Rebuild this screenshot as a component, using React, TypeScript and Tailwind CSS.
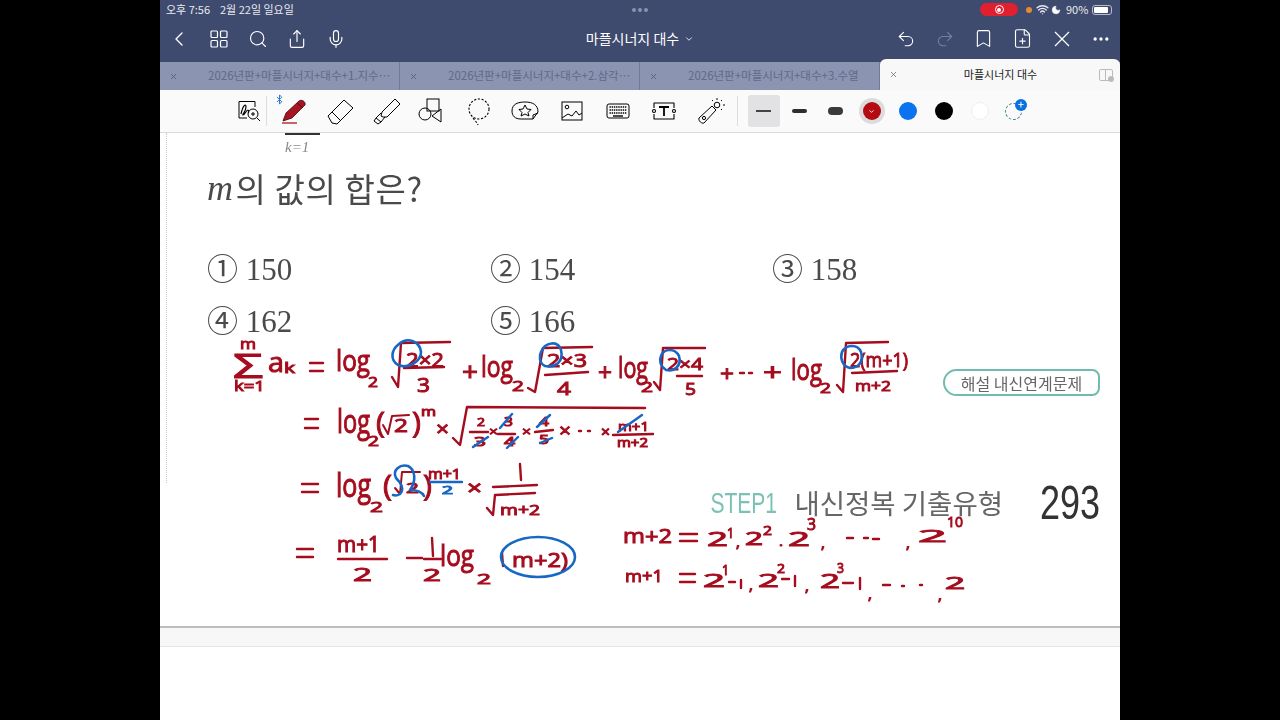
import { ChevronLeft, ChevronDown, Search, Share, Mic, Undo2, Redo2, Bookmark, FilePlus, MoreHorizontal, X, Wifi, Moon, Bluetooth } from "lucide-react";
import type { ReactNode } from "react";

const RED = "#a50d1e";
const BLUE = "#1668c4";

function T({ x, y, s, w, c, children }: { x: number; y: number; s: number; w?: number; c?: string; children: ReactNode }) {
  const col = c ?? RED;
  return (
    <text x={x} y={y} fontSize={s} fill={col} stroke={col} strokeWidth={1} textLength={w} lengthAdjust={w ? "spacingAndGlyphs" : undefined}>
      {children}
    </text>
  );
}

function P({ d, c, sw }: { d: string; c?: string; sw?: number }) {
  return <path d={d} fill="none" stroke={c ?? RED} strokeWidth={sw ?? 2.4} strokeLinecap="round" strokeLinejoin="round" />;
}

function Ink() {
  return (
    <svg viewBox="160 133 960 495" className="absolute inset-0 w-[960px] h-[495px] font-['Open_Sans',sans-serif] font-normal pointer-events-none blur-[0.3px]">
      {/* row 1 */}
      <T x={240} y={349} s={14} w={16}>m</T>
      <T x={233} y={378} s={32} w={30}>Σ</T>
      <T x={234} y={391} s={15} w={31}>k=1</T>
      <T x={268} y={372} s={27} w={16}>a</T>
      <T x={284} y={373} s={14} w={11}>k</T>
      <P d="M310 363 H323 M310 371 H323" />
      <T x={336} y={371} s={30} w={34}>log</T>
      <T x={368} y={387} s={15} w={10}>2</T>
      <P d="M392 377 L398 387 L401 343 L450 342" />
      <T x={406} y={367} s={20} w={38}>2×2</T>
      <P d="M404 368 L444 367" />
      <T x={417} y={392} s={20} w={13}>3</T>
      <T x={462} y={381} s={26} w={16}>+</T>
      <T x={481} y={377} s={30} w={32}>log</T>
      <T x={512} y={391} s={15} w={12}>2</T>
      <P d="M528 388 L535 392 L543 348 L592 347" />
      <T x={547} y={367} s={18} w={40}>2×3</T>
      <P d="M545 375 L588 372" />
      <T x={557} y={395} s={19} w={14}>4</T>
      <T x={598} y={381} s={24} w={14}>+</T>
      <T x={618} y={378} s={30} w={30}>log</T>
      <T x={641} y={392} s={14} w={12}>2</T>
      <P d="M654 382 L660 390 L663 348 L705 348" />
      <T x={667} y={370} s={17} w={36}>2×4</T>
      <P d="M677 376 L702 376" />
      <T x={685} y={395} s={17} w={11}>5</T>
      <T x={720} y={381} s={22} w={14}>+</T>
      <P d="M740 373 H744 M749 373 H752" />
      <T x={763} y={381} s={24} w={19}>+</T>
      <T x={791} y={380} s={30} w={31}>log</T>
      <T x={820} y={393} s={14} w={11}>2</T>
      <P d="M837 385 L843 392 L846 343 L888 342" />
      <T x={850} y={367} s={20} w={58}>2(m+1)</T>
      <P d="M852 373 L897 371" />
      <T x={855} y={391} s={15} w={36}>m+2</T>
      {/* row 2 */}
      <P d="M305 419 H318 M305 428 H318" />
      <T x={337} y={433} s={32} w={33}>log</T>
      <T x={368} y={446} s={14} w={11}>2</T>
      <T x={376} y={433} s={30} w={9}>(</T>
      <P d="M383 425 L388 434 L392 416 L409 415" sw={2} />
      <T x={394} y={432} s={19} w={14}>2</T>
      <T x={412} y={433} s={30} w={9}>)</T>
      <T x={421} y={416} s={12} w={15}>m</T>
      <T x={436} y={436} s={20} w={13}>×</T>
      <P d="M453 438 L460 445 L467 407 L645 408" />
      <T x={477} y={426} s={11} w={8}>2</T>
      <P d="M470 432 H488" />
      <T x={474} y={446} s={12} w={12}>3</T>
      <T x={489} y={436} s={13} w={9}>×</T>
      <T x={504} y={426} s={13} w={9}>3</T>
      <P d="M498 434 H515" />
      <T x={504} y={446} s={12} w={11}>4</T>
      <T x={522} y={436} s={13} w={9}>×</T>
      <T x={539} y={426} s={13} w={10}>4</T>
      <P d="M535 432 L553 430" />
      <T x={539} y={444} s={12} w={10}>5</T>
      <T x={559} y={437} s={19} w={12}>×</T>
      <P d="M579 431 H581 M588 431 H590" />
      <T x={601} y={437} s={14} w={9}>×</T>
      <T x={618} y={431} s={13} w={31}>m+1</T>
      <P d="M613 435 L653 434" />
      <T x={617} y={447} s={12} w={31}>m+2</T>
      {/* row 3 */}
      <P d="M302 484 H318 M302 492 H318" />
      <T x={336} y={497} s={32} w={35}>log</T>
      <T x={370} y={512} s={15} w={13}>2</T>
      <T x={383} y={496} s={30} w={9}>(</T>
      <P d="M395 488 L400 494 L402 472 L420 472" sw={2} />
      <T x={406} y={493} s={15} w={13}>2</T>
      <T x={423} y={496} s={30} w={9}>)</T>
      <T x={428} y={479} s={14} w={33}>m+1</T>
      <T x={467} y={495} s={20} w={15}>×</T>
      <P d="M520 464 L521 480" />
      <P d="M493 487 L537 485" />
      <P d="M487 508 L493 515 L495 495 L535 493" />
      <T x={500} y={515} s={15} w={40}>m+2</T>
      {/* row 4 */}
      <P d="M297 549 H313 M297 557 H313" />
      <T x={337} y={552} s={21} w={43}>m+1</T>
      <P d="M338 559 H387" />
      <T x={353} y={581} s={19} w={19}>2</T>
      <P d="M407 558 H422" />
      <P d="M432 538 L433 556" />
      <P d="M424 559 H441" />
      <T x={423} y={581} s={17} w={18}>2</T>
      <T x={440} y={566} s={30} w={34}>log</T>
      <T x={477} y={584} s={14} w={14}>2</T>
      <P d="M502 553 L503 566" />
      <T x={512} y={567} s={20} w={56}>m+2)</T>
      {/* right block */}
      <T x={623} y={543} s={20} w={49}>m+2</T>
      <P d="M680 534 H697 M680 541 H697" />
      <T x={707} y={546} s={20} w={21}>2</T>
      <T x={727} y={538} s={15} w={7}>1</T>
      <T x={736} y={547} s={14} w={4}>,</T>
      <T x={745} y={545} s={18} w={18}>2</T>
      <T x={763} y={535} s={13} w={9}>2</T>
      <T x={779} y={546} s={12} w={4}>.</T>
      <T x={788} y={546} s={20} w={22}>2</T>
      <T x={807} y={530} s={16} w={9}>3</T>
      <T x={821} y={548} s={14} w={4}>,</T>
      <P d="M847 538 H853 M864 538 H868 M873 539 H879" />
      <T x={906} y={548} s={14} w={4}>,</T>
      <T x={918} y={542} s={17} w={29}>2</T>
      <T x={947} y={527} s={15} w={16}>10</T>
      <T x={625} y={582} s={17} w={38}>m+1</T>
      <P d="M680 574 H695 M680 582 H695" />
      <T x={703} y={587} s={19} w={22}>2</T>
      <T x={722} y={575} s={14} w={7}>1</T>
      <P d="M729 582 H735 M741 580 V588" />
      <T x={749} y={590} s={14} w={4}>,</T>
      <T x={758} y={587} s={19} w={21}>2</T>
      <T x={777} y={573} s={13} w={8}>2</T>
      <P d="M782 579 H789 M795 576 V586" />
      <T x={805} y={591} s={14} w={4}>,</T>
      <T x={820} y={588} s={20} w={20}>2</T>
      <T x={837} y={573} s={15} w={7}>3</T>
      <P d="M843 583 H853 M860 578 V589" />
      <T x={868} y={599} s={14} w={4}>,</T>
      <P d="M883 585 H890 M902 586 H904 M920 585 H922" />
      <T x={938} y={600} s={14} w={4}>,</T>
      <T x={945} y={589} s={16} w={20}>2</T>
      {/* blue */}
      <P c={BLUE} sw={2.6} d="M399 344 C408 336 420 342 421 352 C421 362 408 369 398 365 C390 360 391 350 399 344" />
      <P c={BLUE} sw={2.6} d="M541 352 C545 342 558 340 561 350 C564 362 555 368 545 366 C539 363 539 356 541 352" />
      <P c={BLUE} sw={2.6} d="M661 356 C664 348 675 348 679 356 C682 366 674 372 666 370 C660 366 659 360 661 356" />
      <P c={BLUE} sw={2.6} d="M842 352 C846 344 858 344 861 352 C864 362 858 368 850 368 C842 366 840 358 842 352" />
      <P c={BLUE} d="M473 447 L488 437 M500 428 L512 414 M507 448 L518 437 M537 427 L550 415 M540 443 L552 438 M618 432 L642 415" />
      <P c={BLUE} sw={2.6} d="M393 495 C400 497 408 490 396 478 C392 470 400 464 408 466 C416 470 416 482 410 490 C418 490 422 492 424 496" />
      <P c={BLUE} d="M430 482 H462" />
      <T x={442} y={494} s={10} w={11} c={BLUE}>2</T>
      <ellipse cx={538} cy={557} rx={37} ry={20} fill="none" stroke={BLUE} strokeWidth={2.6} />
    </svg>
  );
}

function Pen() {
  return (
    <svg width="30" height="30" viewBox="0 0 30 30">
      <path d="M5 25 L8 17 L21 5 C24 3 28 6 27 9 L14 22 Z" fill="#a81420" stroke="#3a0a0e" strokeWidth="0.8" />
      <path d="M19 7 L25 12" stroke="#5a0a10" strokeWidth="1" />
      <path d="M4 27 H19" stroke="#a81420" strokeWidth="1.3" />
    </svg>
  );
}
const icn = "fill-none stroke-black";
function Eraser() {
  return (
    <svg width="30" height="30" viewBox="0 0 30 30" className={icn} strokeWidth="1">
      <path d="M3 20 L19 4 L28 12 L12 28 L7 27 Z" />
      <path d="M7 16 L16 25" />
    </svg>
  );
}
function Highlighter() {
  return (
    <svg width="30" height="30" viewBox="0 0 30 30" className={icn} strokeWidth="1">
      <path d="M11 16 L24 3 L29 8 L16 21 L12 21 L10 20 Z" />
      <path d="M10 17 L5 22 L10 26 L14 21 M5 22 L3 25 L7 28 L10 26" />
    </svg>
  );
}
function Shapes() {
  return (
    <svg width="30" height="30" viewBox="0 0 30 30" className={icn} strokeWidth="1">
      <rect x="10" y="3" width="12" height="12" />
      <circle cx="8" cy="18" r="6" />
      <path d="M24 13 L15 20 L24 26 Z" />
    </svg>
  );
}
function Lasso() {
  return (
    <svg width="30" height="30" viewBox="0 0 30 30" className={icn} strokeWidth="1.1" strokeDasharray="2.2 1.6">
      <ellipse cx="15" cy="13" rx="10" ry="10" />
      <path d="M9 22 C11 25 13 26 14 29" />
    </svg>
  );
}
function Sticker() {
  return (
    <svg width="30" height="30" viewBox="0 0 30 30" className={icn} strokeWidth="1">
      <path d="M2 15 C2 8 8 6 15 6 C23 6 28 9 28 16 L23 23 L11 23 C5 23 2 20 2 15 Z" />
      <path d="M15 9 L17 13 L21 13.5 L18 16.5 L19 20 L15 18 L11 20 L12 16.5 L9 13.5 L13 13 Z" />
      <path d="M23 23 L23 19 L28 17" />
    </svg>
  );
}
function Picture() {
  return (
    <svg width="30" height="30" viewBox="0 0 30 30" className={icn} strokeWidth="1">
      <rect x="5" y="6" width="20" height="18" />
      <circle cx="10" cy="11" r="1.8" />
      <path d="M5 22 L11 18 L15 20 L19 15 L22 19 L25 17" />
    </svg>
  );
}
function Keys() {
  return (
    <svg width="30" height="30" viewBox="0 0 30 30" className={icn} strokeWidth="1">
      <rect x="4" y="8" width="22" height="14" rx="2" />
      <path d="M6.5 11 H24 M6.5 14 H24 M6.5 17 H24" strokeDasharray="1.4 0.8" strokeWidth="1.6" />
      <path d="M10 20 H20" strokeWidth="1.4" />
    </svg>
  );
}
function TextBox() {
  return (
    <svg width="30" height="30" viewBox="0 0 30 30" className={icn} strokeWidth="1.1">
      <path d="M5 12 V7 H25 V12 M5 18 V23 H25 V18" strokeLinejoin="round" />
      <circle cx="5" cy="15" r="1.5" />
      <circle cx="25" cy="15" r="1.5" />
      <path d="M10 11 H20 M15 11 V20" strokeWidth="1.8" />
    </svg>
  );
}
function Laser() {
  return (
    <svg width="30" height="30" viewBox="0 0 30 30" className={icn} strokeWidth="1">
      <path d="M3 22 L16 10 L20 14 L8 27 C6 28 2 25 3 22 Z" />
      <circle cx="8" cy="22" r="1.6" />
      <circle cx="21" cy="9" r="2.8" />
      <path d="M21 2 V4 M27 9 H29 M26 4 L25 5 M16 4 L17 5 M26 14 L25 13" />
    </svg>
  );
}
function SearchNote() {
  return (
    <svg width="24" height="24" viewBox="0 0 24 24" className={icn} strokeWidth="1">
      <path d="M18 8 V2.5 H2 V19 H10" />
      <path d="M4 15 C6 6 9 4 9 8 C9 12 5 16 6 16 C8 16 9 11 11 11 C12 11 11 14 12 14" strokeWidth="1.2" />
      <circle cx="16" cy="15" r="5" />
      <path d="M14 15 H18 M16 13 V17 M20 19 L23 22" />
    </svg>
  );
}
function GridIcon() {
  return (
    <svg width="18" height="18" viewBox="0 0 18 18" fill="none" stroke="white" strokeWidth="1.2">
      <rect x="1" y="1" width="6.5" height="6.5" rx="1" />
      <rect x="10.5" y="1" width="6.5" height="6.5" rx="1" />
      <rect x="1" y="10.5" width="6.5" height="6.5" rx="1" />
      <rect x="10.5" y="10.5" width="6.5" height="6.5" rx="1" />
    </svg>
  );
}
function PenX() {
  return (
    <svg width="18" height="18" viewBox="0 0 18 18" fill="none" stroke="white" strokeWidth="1.3">
      <path d="M2 2 L16 16 M16 2 L2 16" />
    </svg>
  );
}

const tabs = ["2026년판+마플시너지+대수+1.지수…", "2026년판+마플시너지+대수+2.삼각…", "2026년판+마플시너지+대수+3.수열"];
const tools = [Pen, Eraser, Highlighter, Shapes, Lasso, Sticker, Picture, Keys, TextBox, Laser];
const options = ["① 150", "② 154", "③ 158", "④ 162", "⑤ 166"];

export default function App() {
  return (
    <div className="w-full h-[720px] bg-black flex justify-center overflow-hidden font-['Noto_Sans_CJK_KR','Noto_Sans',sans-serif]">
      <div className="w-[960px] h-[720px] bg-white flex flex-col">
        {/* header */}
        <div className="h-[62px] bg-[#3e4a6e] text-white flex flex-col shrink-0">
          <div className="h-[19px] flex items-center pl-[6px] pr-[8px] text-[11px] text-[#e8eaf0]">
            <span className="w-[54px]">오후 7:56</span>
            <span className="w-[80px]">2월 22일 일요일</span>
            <div className="flex-1 flex justify-center gap-[2px]">
              <span className="size-[4px] rounded-full bg-[#8b94ad]" />
              <span className="size-[4px] rounded-full bg-[#8b94ad]" />
              <span className="size-[4px] rounded-full bg-[#8b94ad]" />
            </div>
            <div className="w-[38px] h-[13px] rounded-full bg-[#e0202f] flex items-center justify-center">
              <span className="size-[9px] rounded-full border border-white flex items-center justify-center">
                <span className="size-[4px] rounded-full bg-white" />
              </span>
            </div>
            <span className="size-[6px] rounded-full bg-[#e8892c] ml-[8px]" />
            <Wifi size={13} className="ml-[4px]" strokeWidth={2.6} />
            <Moon size={10} className="ml-[2px] fill-white" />
            <span className="ml-[5px] w-[22px]">90%</span>
            <div className="ml-[4px] w-[20px] h-[10px] rounded-[3px] border border-[#b5bbcb] p-[1px]">
              <div className="h-full w-[85%] bg-white rounded-[1px]" />
            </div>
          </div>
          <div className="flex-1 flex items-center pb-[4px]">
            <div className="w-[38px] flex justify-center"><ChevronLeft size={24} strokeWidth={1.4} /></div>
            <div className="w-[42px] flex justify-center"><GridIcon /></div>
            <div className="w-[36px] flex justify-center"><Search size={20} strokeWidth={1.4} /></div>
            <div className="w-[42px] flex justify-center"><Share size={20} strokeWidth={1.4} /></div>
            <div className="w-[36px] flex justify-center"><Mic size={20} strokeWidth={1.4} /></div>
            <div className="flex-1 flex justify-center items-center gap-[5px] text-[14px] pl-[40px]">
              <span>마플시너지 대수</span>
              <ChevronDown size={10} />
            </div>
            <div className="flex items-center">
              <div className="w-[39px] flex justify-center"><Undo2 size={20} strokeWidth={1.3} /></div>
              <div className="w-[39px] flex justify-center text-[#74809f]"><Redo2 size={20} strokeWidth={1.3} /></div>
              <div className="w-[39px] flex justify-center"><Bookmark size={21} strokeWidth={1.3} /></div>
              <div className="w-[39px] flex justify-center"><FilePlus size={21} strokeWidth={1.3} /></div>
              <div className="w-[39px] flex justify-center"><PenX /></div>
              <div className="w-[39px] flex justify-center"><MoreHorizontal size={20} /></div>
            </div>
          </div>
        </div>
        {/* tabs */}
        <div className="h-[28px] bg-[#8b95b1] flex shrink-0 text-[11.5px] text-[#5f6a89]">
          {tabs.map((t) => (
            <div key={t} className="w-[240px] flex items-center border-r border-[#6f7a98] pl-[9px] gap-[30px]">
              <X size={9} className="text-[#4e5878]" />
              <span className="whitespace-nowrap">{t}</span>
            </div>
          ))}
          <div className="flex-1 -mt-[3px] h-[31px] bg-[#f8f8f8] rounded-t-[6px] flex items-center pl-[9px] text-[#222]">
            <X size={9} className="text-[#666]" />
            <span className="flex-1 text-center text-[11px] pl-[4px]">마플시너지 대수</span>
            <div className="relative w-[14px] h-[12px] mr-[7px] border border-[#bbb] rounded-[2px] flex">
              <span className="w-1/2 border-r border-[#bbb]" />
              <span className="absolute -right-[2px] -bottom-[2px] size-[6px] rounded-full bg-[#bbb]" />
            </div>
          </div>
        </div>
        {/* toolbar */}
        <div className="h-[43px] bg-[#fafafa] border-b border-[#d9d9d9] flex items-center shrink-0 pl-[74px]">
          <div className="w-[30px] flex justify-center"><SearchNote /></div>
          <div className="w-px h-[30px] bg-[#ddd] ml-[2px] mr-[3px]" />
          <div className="relative flex">
            <Bluetooth size={11} strokeWidth={2} className="absolute left-[4px] -top-[2px] text-[#1a73d0]" />
            {tools.map((I, i) => (
              <div key={i} className="w-[46.4px] flex justify-center"><I /></div>
            ))}
          </div>
          <div className="w-px h-[30px] bg-[#ddd] ml-[3px]" />
          <div className="w-[8px]" />
          <div className="w-[36px] flex justify-center">
            <div className="w-[32px] h-[32px] rounded-[3px] bg-[#e2e2e4] flex items-center justify-center"><span className="w-[15px] h-[1.5px] bg-[#444]" /></div>
          </div>
          <div className="w-[36px] flex justify-center"><span className="w-[15px] h-[4px] rounded-full bg-[#2e2e2e]" /></div>
          <div className="w-[36px] flex justify-center"><span className="w-[15px] h-[8px] rounded-full bg-[#3a3a3a]" /></div>
          <div className="w-[36px] flex justify-center">
            <span className="size-[26px] rounded-full bg-[#dcdcdc] flex items-center justify-center">
              <span className="size-[18px] rounded-full bg-[#b40a12] flex items-center justify-center text-white"><ChevronDown size={7} strokeWidth={3} /></span>
            </span>
          </div>
          <div className="w-[36px] flex justify-center"><span className="size-[18px] rounded-full bg-[#0a73f0]" /></div>
          <div className="w-[36px] flex justify-center"><span className="size-[18px] rounded-full bg-black" /></div>
          <div className="w-[36px] flex justify-center"><span className="size-[18px] rounded-full bg-white border border-[#eee]" /></div>
          <div className="w-[32px] flex justify-center relative">
            <span className="size-[17px] rounded-full border border-dashed border-[#3d7f90]" />
            <span className="absolute left-[17px] -top-[4px] size-[12px] rounded-full bg-[#0a6fe0] text-white flex items-center justify-center text-[11px] leading-none">+</span>
          </div>
        </div>
        {/* page */}
        <div className="relative h-[495px] shrink-0 bg-white border-b-2 border-[#bdbdbd] overflow-hidden text-[#4a4a4a]">
          <div className="absolute left-[6px] top-0 h-[350px] border-l border-dotted border-[#ccc]" />
          <div className="pl-[47px] pr-[20px] flex flex-col blur-[0.3px]">
            <div className="ml-[78px] w-[35px] h-[2px] bg-[#333]" />
            <div className="ml-[78px] -mt-[1px] h-[22px] text-[15px] leading-[26px] text-[#888] font-['Liberation_Serif',serif] italic">k=1</div>
            <div className="mt-[12px] h-[40px] flex items-center text-[33px] leading-none tracking-[0.6px]">
              <span className="font-['Liberation_Serif',serif] italic text-[36px] mr-[2px]">m</span>의 값의 합은?
            </div>
            <div className="mt-[44px] grid grid-cols-[283px_282px_1fr] gap-y-[16px] font-['Liberation_Serif','Noto_Sans_CJK_KR',serif] text-[31px] leading-[36px]">
              {options.map((o) => <div key={o}>{o}</div>)}
            </div>
            <div className="self-end mt-[29px] w-[157px] h-[27px] border-2 border-[#6fbcae] rounded-l-[14px] rounded-r-[8px] flex items-center justify-center text-[16px] leading-none text-[#666]">
              해설 내신연계문제
            </div>
            <div className="self-end mt-[83px] flex items-center h-[48px]">
              <div className="w-[66px] flex justify-end whitespace-nowrap">
                <span className="origin-right scale-x-[0.7] text-[30px] leading-none text-[#7cc2b4] font-['Liberation_Sans',sans-serif]">STEP1</span>
              </div>
              <span className="ml-[17px] text-[27.5px] whitespace-nowrap text-[#666]">내신정복 기출유형</span>
              <div className="ml-[37px] w-[60px] flex justify-end">
                <span className="origin-right scale-x-[0.75] text-[48px] leading-none text-[#333] font-['Liberation_Sans',sans-serif]">293</span>
              </div>
            </div>
          </div>
          <Ink />
        </div>
        <div className="h-[19px] bg-[#f7f7f7] border-b border-[#e4e4e4] shrink-0" />
        <div className="flex-1 bg-white" />
      </div>
    </div>
  );
}
